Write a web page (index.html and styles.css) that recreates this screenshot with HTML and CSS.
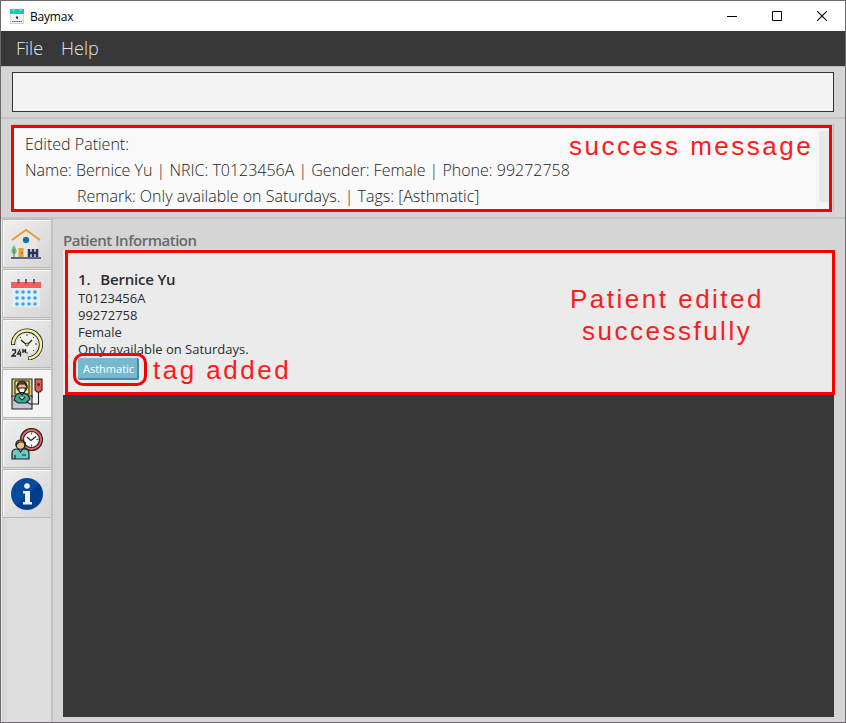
FILE: index.html
```html
<!DOCTYPE html>
<html lang="en">
<head>
<meta charset="utf-8">
<title>Baymax</title>
<link rel="stylesheet" href="styles.css">
</head>
<body>
<div class="window">
  <header class="titlebar">
    <svg class="app-icon" width="14" height="16" viewBox="0 0 14 16"><rect y="1" width="14" height="15" fill="#f3f3f3"/><path d="M0 1h14v5H0z" fill="#15c9b7"/><path d="M3.500 0v3M10.500 0v3" stroke="#a7dcd8" stroke-width="1.500"/><path d="M6 8.500h2v2H6zM7 10h1v1H7z" fill="#333"/><path d="M2 13.500h10" stroke="#555" stroke-width="1.200" stroke-dasharray="1.200 .5"/><path d="M0 15.500h14M.25 6v9M13.750 6v9" stroke="#aaa" stroke-width=".5"/></svg>
    <span class="title">Baymax</span>
    <div class="controls">
      <svg width="10" height="10" viewBox="0 0 10 10"><path d="M0 5.500h10" stroke="#000"/></svg>
      <svg width="10" height="10" viewBox="0 0 10 10"><path d="M.5.5h9v9h-9z" fill="none" stroke="#000"/></svg>
      <svg width="10" height="10" viewBox="0 0 10 10"><path d="M0 0l10 10M10 0L0 10" stroke="#000" stroke-width="1.100"/></svg>
    </div>
  </header>
  <nav class="menu"><span class="file">File</span><span class="help">Help</span></nav>
  <section class="command"><div class="field"></div></section>
  <section class="result">
    <div class="message">
      <p class="m1">Edited Patient:</p>
      <p class="m2">Name: Bernice Yu | NRIC: T0123456A | Gender: Female | Phone: 99272758</p>
      <p class="m3">Remark: Only available on Saturdays. | Tags: [Asthmatic]</p>
      <div class="track"><div class="thumb"></div></div>
      <span class="note note-success">success message</span>
    </div>
  </section>
  <main class="main">
    <aside class="tabs">
      <div class="tab"><svg width="32" height="32" viewBox="0 0 32 32"><path d="M5 12L15 3l11 9v18H5z" fill="#e9e7df"/><path d="M1 12L15 2l14 10" fill="none" stroke="#e89b3c" stroke-width="2"/><circle cx="15" cy="12" r="3.200" fill="#1684ba"/><path d="M15 9v6M12 12h6" stroke="#164f78" stroke-width=".7"/><path d="M7.500 20h5v9h-5z" fill="#ed9d3a"/><path d="M11 24v2" stroke="#775b39"/><path d="M3 17c3 4 4 9 0 9s-3-5 0-9z" fill="#71c77b"/><path d="M3 21v8" stroke="#557060"/><path d="M18 21v8M22 21v8M26 21v8M17 25h10" stroke="#2b335f" stroke-width="2.500"/><path d="M0 30h30" stroke="#343b67" stroke-width="1.500"/></svg></div>
      <div class="tab"><svg width="32" height="32" viewBox="0 0 32 32"><path d="M1 9h28v20H1z" fill="#e0f0f7"/><path d="M0 4h30v6H0z" fill="#fb5c5c"/><path d="M7.500 1v5M15 1v5M23 1v5" stroke="#5e6c77" stroke-width="2"/><g fill="#3ea4e6"><circle cx="6" cy="14" r="1.800"/><circle cx="12" cy="14" r="1.800"/><circle cx="18" cy="14" r="1.800"/><circle cx="24" cy="14" r="1.800"/><circle cx="6" cy="20" r="1.800"/><circle cx="12" cy="20" r="1.800"/><circle cx="18" cy="20" r="1.800"/><circle cx="24" cy="20" r="1.800"/><circle cx="6" cy="26" r="1.800"/><circle cx="12" cy="26" r="1.800"/><circle cx="18" cy="26" r="1.800"/><circle cx="24" cy="26" r="1.800"/></g></svg></div>
      <div class="tab"><svg width="32" height="32" viewBox="0 0 32 32"><path d="M2 17A14 14 0 1 1 17 30.500" fill="none" stroke="#222" stroke-width="4.200"/><path d="M2 16.200A14 14 0 1 1 17.700 30.500" fill="none" stroke="#f8ed9f" stroke-width="2.500"/><circle cx="16" cy="16" r="10" fill="#f0f0ed"/><path d="M16 6v2M23 9l-1 1M26 16h-2M9 9l1 1M16 24v2M23 23l-1-1" stroke="#444" stroke-width="1"/><path d="M10 12l6 5 5-5" fill="none" stroke="#222" stroke-width="1.300"/><circle cx="16" cy="16.500" r="1.500" fill="#e6ca67" stroke="#222" stroke-width=".7"/><path d="M0 20h14v10H0z" fill="#e0e0e0"/><path d="M1 22h3.500v2.500L1 28h4M9 21.500L6.500 26H10M9.500 23.500V28.500M12 21v4M12 23h2.500M14.500 21v4" fill="none" stroke="#222" stroke-width="1.300"/></svg></div>
      <div class="tab active"><svg width="32" height="32" viewBox="0 0 32 32"><g stroke="#222" stroke-width="1.100"><path d="M1 1h20v18H1z" fill="#eccd68"/><path d="M4 3h14v13H4z" fill="#fae898"/><path d="M1 18h20v13H1z" fill="#c8c7da"/><circle cx="11" cy="9" r="5" fill="#eab783"/><path d="M6 9c0-8 10-8 10 0l-2-3H8z" fill="#69402d"/><path d="M7.500 10h7l-1 4.500h-5z" fill="#f4f2ee"/><path d="M5 17l4-2 2 2 2-2 4 2 2 4-4 4H7l-4-3z" fill="#30ae91"/><path d="M8 19l3 3 3-3" fill="#e8e8f0"/><path d="M24 1h7v11l-2 2h-3l-2-2z" fill="#e05d50"/><path d="M27.500 14v4" /><path d="M27.500 18v8H19l-3-2" fill="none"/></g><circle cx="27.500" cy="6.500" r="1.500" fill="#671f29"/></svg></div>
      <div class="tab"><svg width="32" height="32" viewBox="0 0 32 32"><g stroke="#222" stroke-width="1.200"><circle cx="20.500" cy="11.500" r="11" fill="#ec6464"/><circle cx="20.500" cy="11.500" r="8" fill="#fafafa"/><path d="M16 9l4 3.500 5-4" fill="none"/><path d="M20.500 4.500v2M27.500 11.500h-2M20.500 16.500v2M14 15l1-1" stroke-width=".8"/><path d="M1 31v-6q0-4 5-4h7q5 0 5 4v6z" fill="#68c9ca"/><path d="M6.500 20l3 4 3-4" fill="#eee"/><circle cx="9.500" cy="17" r="4.300" fill="#f1c481"/><path d="M5 17c-1-6 9-7 9.500 0l-2-3H8z" fill="#e7b65b"/><path d="M11 27h4M4 27v4" fill="none"/></g></svg></div>
      <div class="tab"><svg width="32" height="32" viewBox="0 0 32 32"><circle cx="16" cy="16" r="16" fill="#064a9c"/><path d="M5 27.500A16 16 0 0 0 28 5.500z" fill="#023c8c"/><circle cx="16" cy="8" r="2.800" fill="#f2f5f7"/><path d="M12 13h7v11h2v2.500h-9V24h2v-8.500h-2z" fill="#f2f5f7"/></svg></div>
    </aside>
    <section class="content">
      <h1>Patient Information</h1>
      <div class="list">
        <article class="card">
          <h2><span>1.</span><span>Bernice Yu</span></h2>
          <p class="c1">T0123456A</p>
          <p class="c2">99272758</p>
          <p class="c3">Female</p>
          <p class="c4">Only available on Saturdays.</p>
          <span class="tag">Asthmatic</span>
          <div class="tag-ring"></div>
          <span class="note note-tag">tag added</span>
          <span class="note note-edited">Patient edited</span>
          <span class="note note-successfully">successfully</span>
        </article>
      </div>
    </section>
  </main>
</div>
</body>
</html>
```
FILE: styles.css
```css
* { box-sizing: border-box; }
body { margin: 0; font-family: "Open Sans", sans-serif; }
p, h1, h2 { margin: 0; white-space: nowrap; }
svg { display: block; flex: none; }
.window { width: 846px; height: 723px; border: 1px solid #6c6a6c; background: #d5d5d5; display: flex; flex-direction: column; overflow: hidden; }
.titlebar { height: 30px; flex: none; background: #fff; display: flex; align-items: center; padding: 0 18px 0 9px; }
.title { font-size: 12px; letter-spacing: -.2px; margin-left: 6px; color: #000; }
.controls { margin-left: auto; display: flex; gap: 35px; }
.menu { height: 35px; flex: none; background: #383838; color: #e3e3e3; font-size: 18px; font-weight: 300; line-height: 35px; padding-left: 15px; display: flex; gap: 18px; }
.command { height: 53px; flex: none; border-top: 1px solid #bbb; border-bottom: 2px solid #c4c4c4; padding: 5px 11px; }
.field { height: 40px; background: #f4f4f4; border: 1px solid #333; }
.result { height: 100px; flex: none; border-bottom: 2px solid #c4c4c4; padding: 6px 13px 0 10px; }
.message { position: relative; height: 87px; background: #fafafa; border: 3px solid #f90000; padding: 3px 0 0 11px; box-shadow: 1px 0 #d5d5d5, 2px -1px #bdbdbd; color: #222; font-size: 16px; font-weight: 300; line-height: 26px; }
.m3 { padding-left: 52px; }
.track { position: absolute; right: 0; top: 0; width: 13px; height: 81px; background: #f4f4f4; padding: 3px 0 0 3px; }
.thumb { height: 71px; background: #e8e8e8; border-radius: 3px 0 0 3px; }
.note { position: absolute; color: #ff1a1a; font: 26px/30px "Liberation Sans", sans-serif; letter-spacing: 2.500px; white-space: nowrap; }
.note-success { left: 555px; top: 3px; }
.main { flex: 1; display: flex; min-height: 0; }
.tabs { width: 52px; border-left: 1px solid #eee; border-right: 2px solid #c2c2c2; background: linear-gradient(90deg, #d3d3d3, #dedede 6px); display: flex; flex-direction: column; gap: 1px; }
.tab { height: 49px; flex: none; border: 1px solid #b9b9b9; border-right: 0; border-radius: 2px 0 0 2px; background: linear-gradient(135deg, #efefef, #d5d5d5); box-shadow: inset 1px 1px #fafafa; padding: 8px 0 0 8px; }
.active { background: #f5f5f5; }
.content { flex: 1; padding: 10px 10px 5px 10px; display: flex; flex-direction: column; }
h1 { height: 21px; color: #696969; font-size: 15px; font-weight: 600; line-height: 22px; letter-spacing: -.5px; }
.list { flex: 1; background: #383838; width: 771px; }
.card { position: relative; width: 770px; height: 145px; margin-left: 2px; background: #ebebeb; border: 3px solid #f90000; padding: 15px 0 0 10px; color: #2d2d2d; font-size: 13px; line-height: 17px; box-shadow: -2px 0 #ebebeb; }
h2 { font-size: 15px; font-weight: 600; line-height: 22px; display: flex; gap: 10px; letter-spacing: -.2px; }
.tag { display: block; width: 61px; height: 22px; background: #75b9cf; border-right: 2px solid #478b9e; border-bottom: 2px solid #478b9e; border-radius: 2px; color: #fff; font-size: 11px; line-height: 21px; padding-left: 5px; }
.tag-ring { position: absolute; left: 5px; top: 100px; width: 74px; height: 33px; border: 3px solid #f90000; border-radius: 10px; }
.note-tag { left: 85px; top: 102px; }
.note-edited { left: 502px; top: 31px; }
.note-successfully { left: 514px; top: 63px; }
```
